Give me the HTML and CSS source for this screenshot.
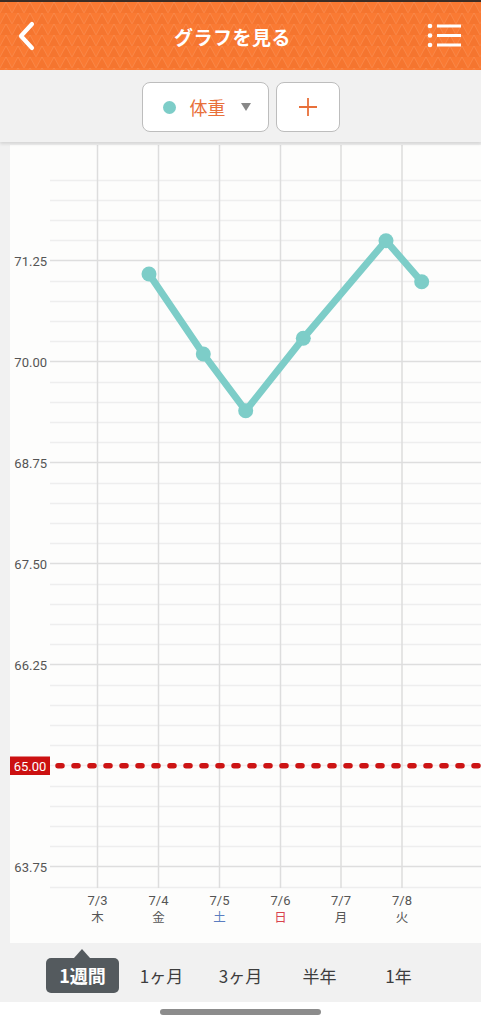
FILE: index.html
```html
<!DOCTYPE html>
<html lang="ja">
<head>
  <meta charset="UTF-8">
  <title>グラフを見る</title>
  <meta name="viewport" content="width=device-width, initial-scale=1">
  <link rel="stylesheet" href="styles.css">
</head>
<body>
  <div class="status-edge"></div>
  <header class="app-header">
    <svg class="header-pattern" width="481" height="68">
      <defs>
        <pattern id="tri" width="12" height="11" patternUnits="userSpaceOnUse">
          <path d="M0 11 L6 0 L12 11 Z" fill="rgba(190,60,0,0.07)"/>
          <path d="M0 11 L6 0 L12 11" fill="none" stroke="rgba(255,255,255,0.10)" stroke-width="1"/>
        </pattern>
      </defs>
      <rect width="481" height="68" fill="url(#tri)"/>
    </svg>
    <button class="icon-btn back" aria-label="戻る">
      <svg width="22" height="32" viewBox="0 0 22 32">
        <path d="M16 4 L5 16 L16 28" fill="none" stroke="#fff" stroke-width="4.2" stroke-linecap="round" stroke-linejoin="round"/>
      </svg>
    </button>
    <h1 class="title">グラフを見る</h1>
    <button class="icon-btn menu" aria-label="メニュー">
      <svg width="36" height="28" viewBox="0 0 36 28">
        <circle cx="3" cy="4" r="2.3" fill="#fff"/>
        <circle cx="3" cy="13.5" r="2.3" fill="#fff"/>
        <circle cx="3" cy="23" r="2.3" fill="#fff"/>
        <path d="M10 4 H34 M10 13.5 H34 M10 23 H34" stroke="#fff" stroke-width="3"/>
      </svg>
    </button>
  </header>

  <div class="toolbar">
    <button class="selector">
      <span class="dot"></span>
      <span class="sel-label">体重</span>
      <span class="caret"></span>
    </button>
    <button class="add-btn" aria-label="追加">
      <svg width="20" height="20" viewBox="0 0 20 20">
        <path d="M10 1 V19 M1 10 H19" stroke="#e8703a" stroke-width="1.8"/>
      </svg>
    </button>
  </div>

  <div class="chart-wrap">
    <svg class="chart" width="471" height="798" viewBox="0 0 471 798">
      <!-- 横線 (0.25刻み) -->
      <g class="grid-minor">
        <line x1="40" x2="471" y1="35.5" y2="35.5"/>
        <line x1="40" x2="471" y1="55.5" y2="55.5"/>
        <line x1="40" x2="471" y1="75.5" y2="75.5"/>
        <line x1="40" x2="471" y1="95.5" y2="95.5"/>
        <line x1="40" x2="471" y1="136.5" y2="136.5"/>
        <line x1="40" x2="471" y1="156.5" y2="156.5"/>
        <line x1="40" x2="471" y1="176.5" y2="176.5"/>
        <line x1="40" x2="471" y1="196.5" y2="196.5"/>
        <line x1="40" x2="471" y1="237.5" y2="237.5"/>
        <line x1="40" x2="471" y1="257.5" y2="257.5"/>
        <line x1="40" x2="471" y1="277.5" y2="277.5"/>
        <line x1="40" x2="471" y1="297.5" y2="297.5"/>
        <line x1="40" x2="471" y1="338.5" y2="338.5"/>
        <line x1="40" x2="471" y1="358.5" y2="358.5"/>
        <line x1="40" x2="471" y1="378.5" y2="378.5"/>
        <line x1="40" x2="471" y1="398.5" y2="398.5"/>
        <line x1="40" x2="471" y1="439.5" y2="439.5"/>
        <line x1="40" x2="471" y1="459.5" y2="459.5"/>
        <line x1="40" x2="471" y1="479.5" y2="479.5"/>
        <line x1="40" x2="471" y1="499.5" y2="499.5"/>
        <line x1="40" x2="471" y1="540.5" y2="540.5"/>
        <line x1="40" x2="471" y1="560.5" y2="560.5"/>
        <line x1="40" x2="471" y1="580.5" y2="580.5"/>
        <line x1="40" x2="471" y1="600.5" y2="600.5"/>
        <line x1="40" x2="471" y1="620.5" y2="620.5"/>
        <line x1="40" x2="471" y1="641.5" y2="641.5"/>
        <line x1="40" x2="471" y1="661.5" y2="661.5"/>
        <line x1="40" x2="471" y1="681.5" y2="681.5"/>
        <line x1="40" x2="471" y1="701.5" y2="701.5"/>
        <line x1="40" x2="471" y1="742.5" y2="742.5"/>
      </g>
      <g class="grid-major">
        <line x1="40" x2="471" y1="115.5" y2="115.5"/>
        <line x1="40" x2="471" y1="216.5" y2="216.5"/>
        <line x1="40" x2="471" y1="317.5" y2="317.5"/>
        <line x1="40" x2="471" y1="418.5" y2="418.5"/>
        <line x1="40" x2="471" y1="519.5" y2="519.5"/>
        <line x1="40" x2="471" y1="721.5" y2="721.5"/>
      </g>
      <!-- 縦線 (日付) -->
      <g class="grid-day">
        <line x1="87.5" x2="87.5" y1="0" y2="743"/>
        <line x1="148.5" x2="148.5" y1="0" y2="743"/>
        <line x1="209.5" x2="209.5" y1="0" y2="743"/>
        <line x1="270.5" x2="270.5" y1="0" y2="743"/>
        <line x1="331" x2="331" y1="0" y2="743"/>
        <line x1="392" x2="392" y1="0" y2="743"/>
      </g>

      <g class="y-labels">
        <text x="37" y="120.5">71.25</text>
        <text x="37" y="221.5">70.00</text>
        <text x="37" y="322.5">68.75</text>
        <text x="37" y="423.5">67.50</text>
        <text x="37" y="524.5">66.25</text>
        <text x="37" y="726.5">63.75</text>
      </g>

      <!-- 目標体重 -->
      <line class="goal-line" x1="48" x2="471" y1="620.8" y2="620.8"/>
      <rect class="goal-box" x="0" y="611.5" width="40" height="18.5"/>
      <text class="goal-text" x="20" y="625.5">65.00</text>

      <!-- 体重の推移 -->
      <polyline class="series" points="139,129 193.3,209 235.7,265.7 293.3,193.3 376,95.7 411.7,136.7"/>
      <g class="points">
        <circle cx="139" cy="129" r="7.5"/>
        <circle cx="193.3" cy="209" r="7.5"/>
        <circle cx="235.7" cy="265.7" r="7.5"/>
        <circle cx="293.3" cy="193.3" r="7.5"/>
        <circle cx="376" cy="95.7" r="7.5"/>
        <circle cx="411.7" cy="136.7" r="7.5"/>
      </g>

      <g class="x-labels">
        <text x="87.5" y="760">7/3</text>
        <text x="148.5" y="760">7/4</text>
        <text x="209.5" y="760">7/5</text>
        <text x="270.5" y="760">7/6</text>
        <text x="331" y="760">7/7</text>
        <text x="392" y="760">7/8</text>
        <text class="wd" x="87.5" y="777">木</text>
        <text class="wd" x="148.5" y="777">金</text>
        <text class="wd sat" x="209.5" y="777">土</text>
        <text class="wd sun" x="270.5" y="777">日</text>
        <text class="wd" x="331" y="777">月</text>
        <text class="wd" x="392" y="777">火</text>
      </g>
    </svg>
  </div>

  <nav class="range-tabs">
    <div class="tab active"><span class="pill">1週間</span></div>
    <div class="tab">1ヶ月</div>
    <div class="tab">3ヶ月</div>
    <div class="tab">半年</div>
    <div class="tab">1年</div>
  </nav>

  <div class="home-area">
    <div class="home-bar"></div>
  </div>
</body>
</html>
```

FILE: styles.css
```css
body {
  margin: 0;
  width: 481px;
  height: 1024px;
  overflow: hidden;
  background-color: #f1f1f1;
  font-family: Roboto, "Noto Sans CJK JP", sans-serif;
  color: #444;
}
button {
  font-family: inherit;
  cursor: pointer;
}

.status-edge {
  height: 2px;
  background: #3b2d25;
}

/* en-tête orange */
.app-header {
  position: relative;
  height: 68px;
  background-color: #fa7a33;
  display: flex;
  align-items: center;
  justify-content: space-between;
  padding: 0 18px 0 16px;
}
.header-pattern {
  position: absolute;
  left: 0;
  top: 0;
}
.title {
  position: relative;
  margin: 0;
  color: #fff;
  font-family: "Noto Sans CJK JP", sans-serif;
  font-size: 19px;
  font-weight: bold;
  letter-spacing: 0.5px;
}
.icon-btn {
  position: relative;
  background: none;
  border: none;
  padding: 0;
  display: flex;
}

/* barre de sélection */
.toolbar {
  height: 72px;
  display: flex;
  justify-content: center;
  align-items: flex-start;
  gap: 7px;
  padding-top: 12px;
  box-sizing: border-box;
  background-color: #f1f1f1;
  box-shadow: 0 2px 3px rgba(0,0,0,0.12);
  position: relative;
}
.selector, .add-btn {
  height: 50px;
  background: #fff;
  border: 1px solid #bdbdbd;
  border-radius: 8px;
  display: flex;
  align-items: center;
}
.selector {
  width: 127px;
  padding: 0 0 0 20px;
}
.dot {
  width: 13px;
  height: 13px;
  border-radius: 50%;
  background: #7dcdc8;
}
.sel-label {
  margin-left: 14px;
  font-family: "Noto Sans CJK JP", sans-serif;
  font-size: 18px;
  color: #e8703a;
}
.caret {
  margin-left: 15px;
  width: 0;
  height: 0;
  border-left: 5.5px solid transparent;
  border-right: 5.5px solid transparent;
  border-top: 8px solid #888;
}
.add-btn {
  width: 64px;
  justify-content: center;
}

/* graphique */
.chart-wrap {
  margin: 3px 0 0 10px;
  height: 798px;
  background: #fdfdfc;
}
.chart {
  display: block;
}
.grid-minor line {
  stroke: #eeeeee;
  stroke-width: 1.5;
}
.grid-major line {
  stroke: #dedede;
  stroke-width: 1.5;
}
.grid-day line {
  stroke: #dddddd;
  stroke-width: 1.5;
}
.y-labels text {
  font-size: 13px;
  fill: #555;
  text-anchor: end;
}
.goal-line {
  stroke: #cc1414;
  stroke-width: 5.5;
  stroke-linecap: round;
  stroke-dasharray: 4 12;
}
.goal-box {
  fill: #cc1111;
}
.goal-text {
  font-size: 13px;
  fill: #fff;
  text-anchor: middle;
}
.series {
  fill: none;
  stroke: #7dcdc8;
  stroke-width: 7;
  stroke-linejoin: round;
}
.points circle {
  fill: #7dcdc8;
}
.x-labels text {
  font-size: 13px;
  fill: #555;
  text-anchor: middle;
}
.x-labels .wd {
  font-family: "Noto Sans CJK JP", sans-serif;
  font-size: 12.5px;
}
.x-labels .sat {
  fill: #5b7dc0;
}
.x-labels .sun {
  fill: #d9434d;
}

/* onglets de période */
.range-tabs {
  height: 59px;
  display: flex;
  justify-content: center;
  background: #f1f1f1;
}
.tab {
  width: 79px;
  display: flex;
  justify-content: center;
  align-items: center;
  padding-top: 5px;
  box-sizing: border-box;
  font-family: "Noto Sans CJK JP", sans-serif;
  font-size: 17px;
  color: #3d3d3d;
}
.pill {
  position: relative;
  width: 73px;
  height: 35px;
  line-height: 35px;
  text-align: center;
  border-radius: 5px;
  background: #545a5e;
  color: #fff;
  font-weight: bold;
  font-size: 18px;
}
.pill::before {
  content: "";
  position: absolute;
  left: 28px;
  top: -9px;
  border-left: 8px solid transparent;
  border-right: 8px solid transparent;
  border-bottom: 9px solid #545a5e;
}

.home-area {
  height: 22px;
  background: #fff;
  display: flex;
  justify-content: center;
  padding-top: 7px;
  box-sizing: border-box;
}
.home-bar {
  width: 161px;
  height: 5.5px;
  border-radius: 3px;
  background: #8c8c8c;
}
```
